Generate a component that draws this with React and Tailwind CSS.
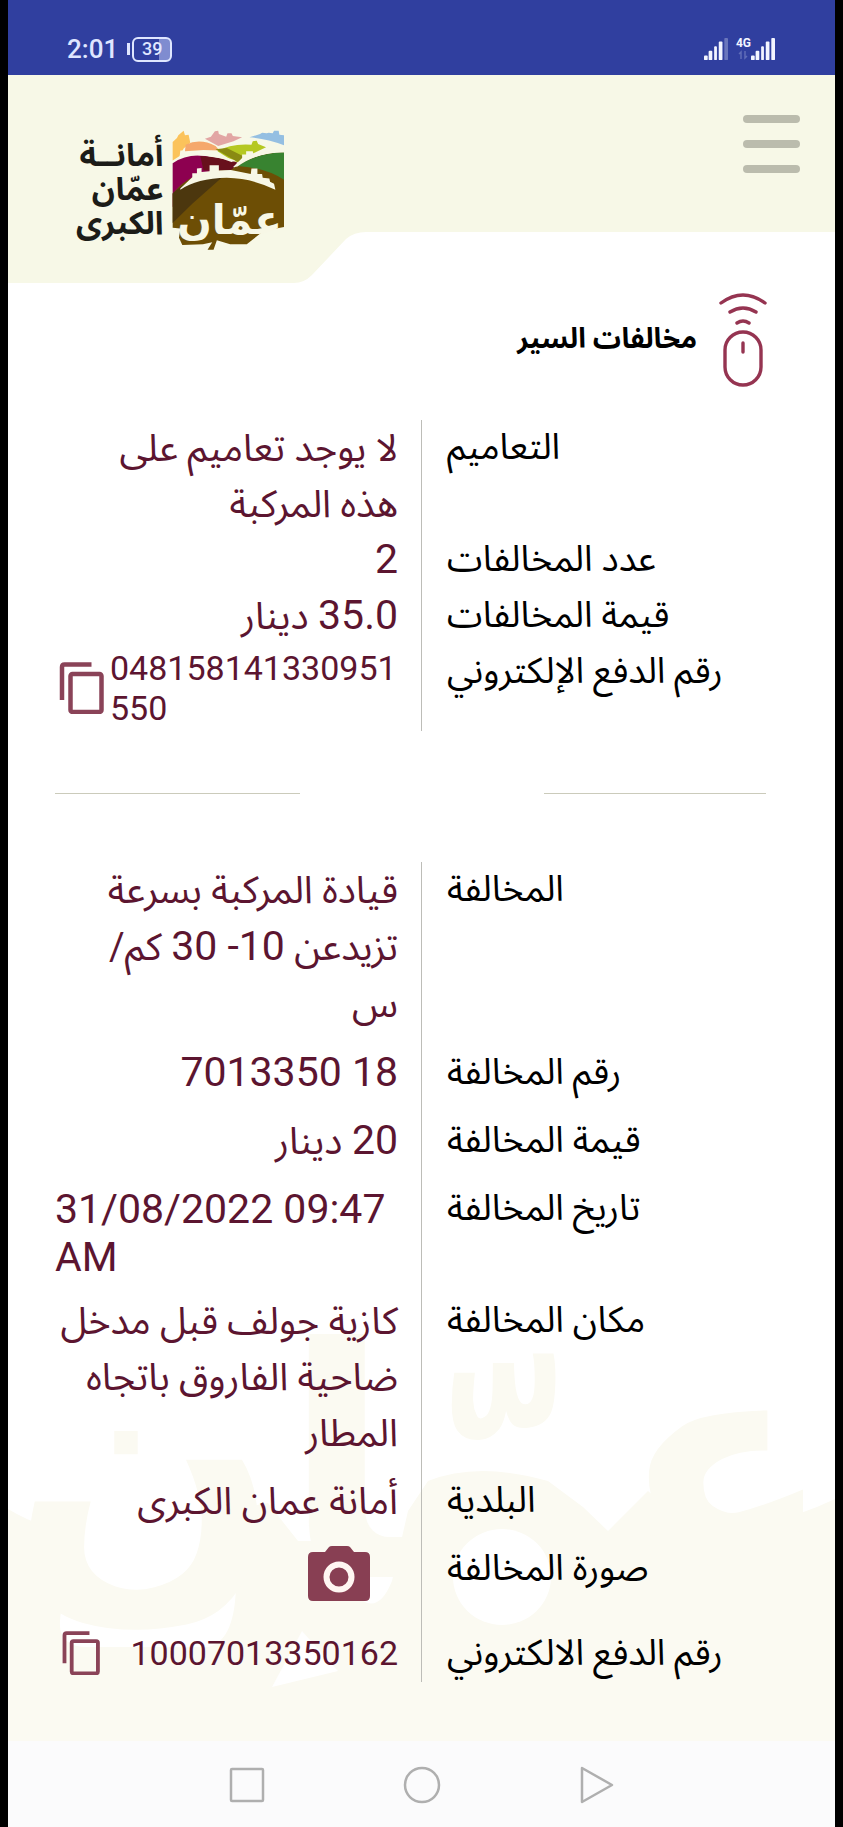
import React from "react";

function SignalBars({ weakLast }) {
  return (
    <svg className="h-6 w-6" viewBox="0 0 26 24" fill="#f3f5ff">
      <rect x="0" y="19" width="4" height="5" rx="1" />
      <rect x="5" y="14" width="4" height="10" rx="1" />
      <rect x="11" y="9" width="3" height="15" rx="1" />
      <rect x="16" y="4" width="4" height="20" rx="1" />
      <rect x="22" y="0" width="4" height="24" rx="1" opacity={weakLast ? 0.3 : 1} />
    </svg>
  );
}

function StatusBar() {
  return (
    <div className="flex h-[75px] items-end justify-between bg-[#303f9f] pb-3 pl-[59px] pr-[60px] text-[#dfe6ff]">
      <div className="flex items-center gap-[9px]">
        <span className="text-[26px] font-medium leading-7">2:01</span>
        <span className="flex items-center gap-[2px]">
          <span className="h-3 w-[3px] bg-[#dfe6ff]" />
          <span className="flex h-[25px] w-10 items-center justify-center rounded-md border-2 border-[#dfe6ff] bg-linear-to-r from-[#303f9f] from-70% to-[#7f8cd0] to-70% text-lg font-medium leading-5">
            39
          </span>
        </span>
      </div>
      <div className="flex items-end gap-2 pb-[2px]">
        <SignalBars weakLast />
        <div className="flex items-end">
          <div className="flex flex-col items-center">
            <span className="text-xs font-bold leading-3 text-[#f3f5ff]">4G</span>
            <svg className="h-3 w-3" viewBox="0 0 12 12" fill="none" stroke="#5f6cb8" strokeWidth="1.5">
              <path d="M4 10V3L2 5M8 2v7l2-2" />
            </svg>
          </div>
          <SignalBars />
        </div>
      </div>
    </div>
  );
}

function Emblem() {
  return (
    <svg className="h-[121px] w-[113px]" viewBox="65 28 340 364" role="img" aria-label="عمّان">
      <path d="M67 64L80 52 84 44 100 30 104 44 115 42 120 66 100 84 88 106 67 120Z" fill="#fbc35b" />
      <path d="M106 72Q150 52 196 76L208 90 160 88 104 92Z" fill="#f5a86c" />
      <path d="M164 54L182 48 194 32 204 30 206 40 228 48 232 38 244 38 248 46 276 50 250 62 204 76Z" fill="#e2a6a4" />
      <path d="M298 50L330 40 336 36 350 38 356 36 368 38 372 30 386 30 388 42 402 44V74Q350 54 298 50Z" fill="#94bfe2" />
      <path d="M202 92Q240 68 304 72L308 62 320 60 324 70 348 80 310 98 274 128 246 120Z" fill="#b5c822" />
      <path d="M196 86L230 82 290 112 262 124Z" fill="#8a8a13" />
      <path d="M67 128Q120 92 190 112L260 136 130 180 67 260Z" fill="#8d0050" />
      <path d="M150 106Q210 108 262 126L246 150 160 150Z" fill="#68101c" />
      <path d="M240 150Q300 100 402 94V320Q370 326 340 332L290 372H240L200 360 190 388 172 388 186 366 158 372 96 374 86 352 90 324 67 322V220Q130 140 240 150Z" fill="#6d4e05" />
      <path d="M262 136Q320 98 402 95V178Q350 142 262 136Z" fill="#388330" />
      <path d="M67 218Q130 160 216 170L126 250 67 308Z" fill="#4c370e" />
      <path d="M88 108L90 90 102 90 104 98 122 98 122 92 134 92 136 98Q200 100 256 120L244 124Q160 94 88 108Z" fill="#f7f7e6" />
      <path d="M248 140L276 112 276 102 288 102 288 92 308 92 310 100 322 98Q360 88 402 84V96Q320 94 262 138Z" fill="#f7f7e6" />
      <path d="M90 204L126 170 126 158 140 158 140 144 154 142 154 154 178 152 178 134 206 134 206 150 242 148 302 160 304 144 322 144 322 160 336 160 338 172 358 174 360 184 372 190 376 208Q310 174 230 172 140 174 90 208Z" fill="#f7f7e6" />
      <text x="238" y="342" textAnchor="middle" direction="rtl" fontFamily="DejaVu Sans" fontWeight="700" fontSize="122" fill="#f7f7e6">عمّان</text>
    </svg>
  );
}

function Header() {
  return (
    <header className="relative flex h-[208px] justify-between pl-[68px] pr-[35px]">
      <svg className="absolute inset-0 h-full w-full" viewBox="0 0 827 208" preserveAspectRatio="none">
        <path d="M0 0H827V157H358Q346 157 338 164L304 200Q296 208 286 208H0Z" fill="#f7f8e7" />
      </svg>
      <div className="relative flex items-start gap-[9px] pt-[55px]">
        <p dir="rtl" className="pt-2 text-[32px] font-bold leading-[34px] text-[#1c1c18]">
          أمانــة
          <br />
          عمّان
          <br />
          الكبرى
        </p>
        <Emblem />
      </div>
      <button aria-label="القائمة" className="relative flex h-fit flex-col gap-[17px] pt-10">
        <span className="h-2 w-[57px] rounded-sm bg-[#bbbcad]" />
        <span className="h-2 w-[57px] rounded-sm bg-[#bbbcad]" />
        <span className="h-2 w-[57px] rounded-sm bg-[#bbbcad]" />
      </button>
    </header>
  );
}

function MouseIcon() {
  return (
    <svg className="h-[94px] w-12" viewBox="0 0 48 94" fill="none" stroke="#953451" strokeWidth="3.4" strokeLinecap="round">
      <path d="M2 10Q24-6 46 10M11 19Q24 11 37 19M18 30Q24 26 30 30" />
      <rect x="6" y="39" width="36" height="53" rx="18" />
      <path d="M24 50V59" />
    </svg>
  );
}

function CopyIcon({ small }) {
  return (
    <svg className={small ? "h-11 w-[38px]" : "h-[52px] w-[45px]"} viewBox="0 0 44 52" fill="none" stroke="#8a4358" strokeWidth="4.5">
      <path d="M2.500 38V5Q2.500 2.500 5 2.500H32" />
      <rect x="11" y="12" width="31" height="38" rx="2" />
    </svg>
  );
}

function CameraIcon() {
  return (
    <svg className="h-[55px] w-[62px]" viewBox="0 0 62 55">
      <path d="M5 6H17L21 1Q22 0 24 0H39Q41 0 42 1L46 6H57Q62 6 62 11V50Q62 55 57 55H5Q0 55 0 50V11Q0 6 5 6Z" fill="#883f53" />
      <circle cx="31" cy="31" r="12.500" fill="none" stroke="#fff6f2" strokeWidth="6" />
    </svg>
  );
}

function Row({ label, children, className = "min-h-14" }) {
  return (
    <div className={`grid grid-cols-[366px_1fr] ${className}`}>
      <dt dir="rtl" className="order-2 pl-[26px] text-left text-[36px] leading-[54px] text-black">{label}</dt>
      <dd dir="rtl" className="order-1 pr-[23px] text-right text-[38px] leading-14 text-[#5c1530]">{children}</dd>
    </div>
  );
}

function Num({ children }) {
  return <span className="text-[41px] leading-10">{children}</span>;
}

function Watermark() {
  return (
    <svg className="absolute bottom-0 left-0 h-[450px] w-full overflow-visible" viewBox="0 0 827 450" preserveAspectRatio="none" aria-hidden="true" fill="#fbfaf2">
      <path d="M0 218Q30 236 60 240L52 330Q50 356 80 356H200Q228 350 228 290 228 240 214 220L260 212 290 250H355V310Q372 320 384 290L400 220 420 190Q470 170 540 190L575 216 600 240 640 200 686 240Q760 240 827 208V450H0Z" />
      <text x="414" y="286" textAnchor="middle" direction="rtl" fontFamily="DejaVu Sans" fontWeight="700" fontSize="320">عمّان</text>
      <ellipse cx="494" cy="286" rx="49" ry="48" fill="#fff" />
      <path d="M264 396L294 340 330 380Z" fill="#fff" />
    </svg>
  );
}

export default function App() {
  return (
    <div className="bg-black px-2 font-[Roboto,'Noto_Sans_Arabic','DejaVu_Sans',sans-serif]">
      <div className="bg-white">
        <StatusBar />
        <Header />
        <main className="relative flex flex-col">
          <Watermark />
          <div dir="rtl" className="relative flex items-start gap-[22px] pr-[68px] pt-[10px]">
            <MouseIcon />
            <h1 className="pt-[26px] text-[28px] font-bold leading-10 text-black">مخالفات السير</h1>
          </div>
          <dl className="relative mx-[47px] mt-[33px]">
            <div className="absolute inset-y-0 left-[366px] w-px bg-[#bdbdb8]" />
            <Row label="التعاميم">
              لا يوجد تعاميم على
              <br />
              هذه المركبة
            </Row>
            <Row label="عدد المخالفات"><Num>2</Num></Row>
            <Row label="قيمة المخالفات"><Num>35.0</Num> دينار</Row>
            <Row label="رقم الدفع الإلكتروني" className="h-[87px]">
              <div dir="ltr" className="flex items-center gap-[6px] pl-1 pt-1">
                <button aria-label="نسخ"><CopyIcon /></button>
                <span className="w-[290px] break-all text-left text-[34px] leading-10">048158141330951550</span>
              </div>
            </Row>
          </dl>
          <div className="relative mx-[47px] mt-[62px] flex justify-between pr-[22px]">
            <hr className="w-[245px] border-[#cbcbbb]" />
            <hr className="w-[222px] border-[#cbcbbb]" />
          </div>
          <dl className="relative mx-[47px] mb-[59px] mt-[68px] flex flex-col gap-3">
            <div className="absolute inset-y-0 left-[366px] w-px bg-[#bdbdb8]" />
            <Row label="المخالفة">
              <div className="leading-[57px]">
                قيادة المركبة بسرعة
                <br />
                تزيدعن <Num>10- 30</Num> كم/
                <br />
                س
              </div>
            </Row>
            <Row label="رقم المخالفة"><bdi dir="ltr" className="text-[41px] leading-10">7013350 18</bdi></Row>
            <Row label="قيمة المخالفة"><Num>20</Num> دينار</Row>
            <Row label="تاريخ المخالفة">
              <div dir="ltr" className="pt-1 text-left text-[41px] leading-[48px]">31/08/2022 09:47 AM</div>
            </Row>
            <Row label="مكان المخالفة">كازية جولف قبل مدخل ضاحية الفاروق باتجاه المطار</Row>
            <Row label="البلدية">أمانة عمان الكبرى</Row>
            <Row label="صورة المخالفة" className="h-[73px]">
              <button aria-label="عرض الصورة" className="mr-7 mt-[5px] block"><CameraIcon /></button>
            </Row>
            <Row label="رقم الدفع الالكتروني">
              <div dir="ltr" className="flex items-center justify-between pl-[7px] text-[34px] leading-[54px]">
                <button aria-label="نسخ"><CopyIcon small /></button>
                <span>10007013350162</span>
              </div>
            </Row>
          </dl>
        </main>
        <nav className="flex h-[87px] items-center justify-center gap-[138px] bg-[#fbfbfc]">
          <button aria-label="التطبيقات">
            <svg className="h-9 w-9" viewBox="0 0 36 36" fill="none" stroke="#afafaf" strokeWidth="2.500"><rect x="2" y="2" width="32" height="32" rx="1" /></svg>
          </button>
          <button aria-label="الرئيسية">
            <svg className="h-[38px] w-[38px]" viewBox="0 0 38 38" fill="none" stroke="#afafaf" strokeWidth="2.500"><circle cx="19" cy="19" r="17" /></svg>
          </button>
          <button aria-label="رجوع">
            <svg className="h-[38px] w-9" viewBox="0 0 36 38" fill="none" stroke="#afafaf" strokeWidth="2.500" strokeLinejoin="round"><path d="M3 2L33 19 3 36Z" /></svg>
          </button>
        </nav>
      </div>
    </div>
  );
}
